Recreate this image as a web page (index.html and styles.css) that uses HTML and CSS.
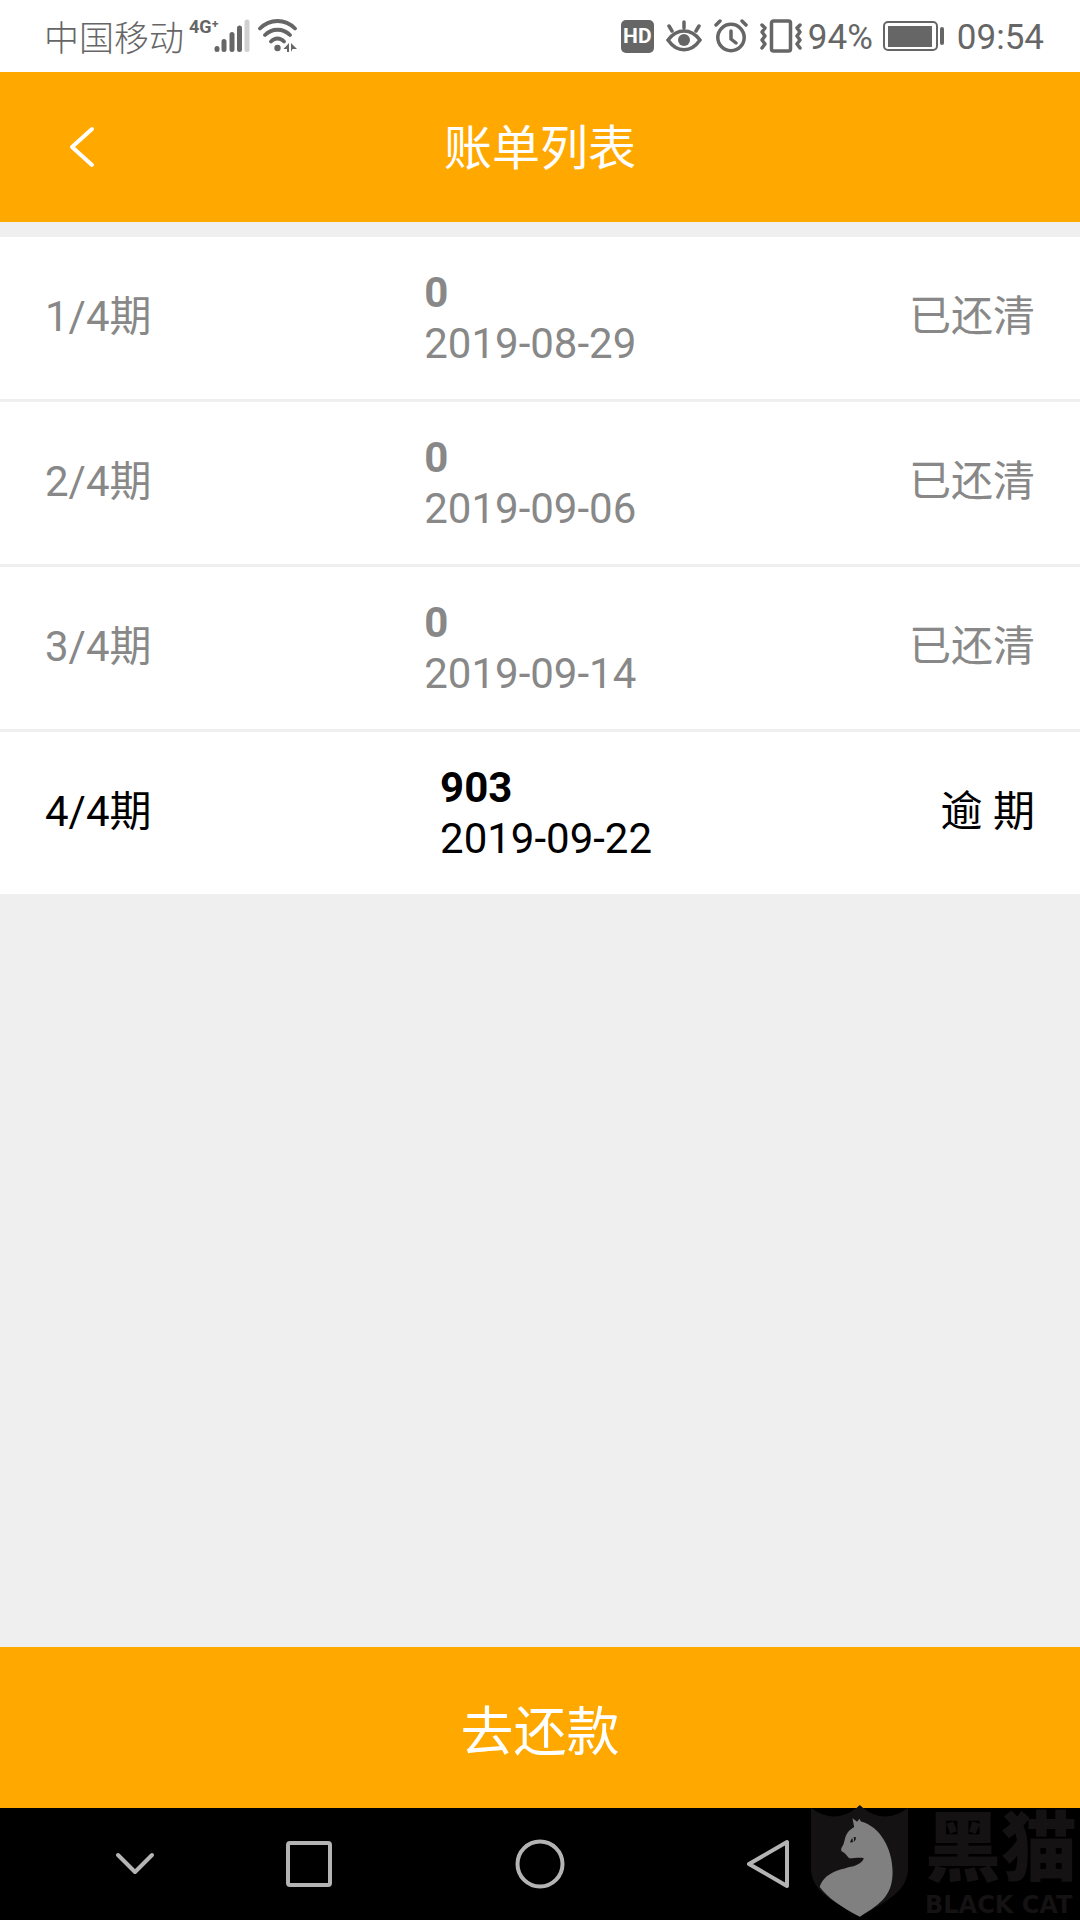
FILE: index.html
```html
<!DOCTYPE html>
<html lang="zh-CN">
<head>
  <meta charset="utf-8">
  <meta name="viewport" content="width=device-width">
  <title>账单列表</title>
  <link rel="stylesheet" href="styles.css">
</head>
<body>
  <div class="status-bar">
    <span class="carrier">中国移动</span>
    <span class="network">4G⁺</span>
    <svg class="signal" width="36" height="34" viewBox="0 0 36 34" fill="none" stroke="#666" stroke-width="5" stroke-linecap="round">
      <path d="M3 29.500v1M10 22.500v8M18 15.500v15M25.500 9v21.500"/>
      <path stroke="#d0d0d0" d="M33 3v27.500"/>
    </svg>
    <svg class="wifi" width="40" height="34" viewBox="0 0 40 34" fill="none" stroke="#666" stroke-width="3.800" stroke-linecap="round">
      <path d="M2 9.500C12-.5 27-.5 37 9.500M7 16c7-7 18-7 25 0M13 22.500c4-4 9-4 13 0"/>
      <circle cx="19.500" cy="29" r="3.200" fill="#666" stroke="none"/>
      <path fill="#666" stroke="none" d="M31 24v9h-2v-3h-3.500zM33 24v9l1.500-3H39z"/>
    </svg>

    <div class="status-right">
      <span class="hd">HD</span>
      <svg width="36" height="34" viewBox="0 0 36 34" fill="none" stroke="#666" stroke-width="3.500" stroke-linecap="round">
        <path d="M2 21C11 9 25 9 34 21C25 34 11 34 2 21zM18 3v6M3 7l3 5M33 7l-3 5"/>
        <circle cx="18" cy="21" r="6" fill="#666" stroke="none"/>
      </svg>
      <svg width="34" height="34" viewBox="0 0 34 34" fill="none" stroke="#666" stroke-width="3.500" stroke-linecap="round">
        <circle cx="17" cy="18.500" r="13.200"/>
        <path d="M17 12v8l5 4M2 6l4-4M32 6l-4-4"/>
      </svg>
      <svg width="42" height="34" viewBox="0 0 42 34" fill="none" stroke="#666" stroke-width="3.500" stroke-linecap="round" stroke-linejoin="round">
        <rect x="11.500" y="2" width="19" height="30" rx="2"/>
        <path d="M2 6l3 3-3 4 3 4-3 4 3 4-3 4M40 6l-3 3 3 4-3 4 3 4-3 4 3 4"/>
      </svg>
      <span class="percent">94%</span>
      <svg class="battery" width="62" height="30" viewBox="0 0 62 30" fill="none" stroke="#666">
        <rect x="1" y="1" width="53" height="28" rx="4" stroke-width="2"/>
        <rect x="5" y="5" width="44" height="21" fill="#666" stroke="none"/>
        <path stroke-width="4" stroke-linecap="round" d="M59 8v14"/>
      </svg>
      <span class="time">09:54</span>
    </div>
  </div>

  <header class="header">
    <a class="back" href="#" aria-label="返回">
      <svg width="26" height="42" viewBox="0 0 26 42" fill="none" stroke="#fff" stroke-width="4" stroke-linecap="round" stroke-linejoin="round">
        <path d="M23 3L3 21l20 18"/>
      </svg>
    </a>
    <h1>账单列表</h1>
  </header>

  <main class="main">
    <ul class="bills">
      <li class="bill">
        <span>1/4期</span>
        <div><strong>0</strong><time>2019-08-29</time></div>
        <span>已还清</span>
      </li>
      <li class="bill">
        <span>2/4期</span>
        <div><strong>0</strong><time>2019-09-06</time></div>
        <span>已还清</span>
      </li>
      <li class="bill">
        <span>3/4期</span>
        <div><strong>0</strong><time>2019-09-14</time></div>
        <span>已还清</span>
      </li>
      <li class="bill overdue">
        <span>4/4期</span>
        <div><strong>903</strong><time>2019-09-22</time></div>
        <span>逾 期</span>
      </li>
    </ul>
  </main>

  <button class="pay" type="button">去还款</button>

  <nav class="nav-bar">
    <button type="button" aria-label="收起">
      <svg width="40" height="24" viewBox="0 0 40 24"><path d="M3 3l17 17L37 3"/></svg>
    </button>
    <button type="button" aria-label="最近任务">
      <svg width="46" height="46" viewBox="0 0 46 46"><rect x="2" y="2" width="42" height="42" rx="2"/></svg>
    </button>
    <button type="button" aria-label="主屏幕">
      <svg width="50" height="50" viewBox="0 0 50 50"><circle cx="25" cy="25" r="22.500"/></svg>
    </button>
    <button type="button" aria-label="返回">
      <svg width="44" height="50" viewBox="0 0 44 50"><path d="M41 3v44L3 25z"/></svg>
    </button>
    <div class="brand">
      <svg width="97" height="112" viewBox="94 75 290 335">
        <path fill="#141213" d="M94 84Q165 135 230 84L240 75L250 84Q315 135 384 84V265C384 335 315 365 240 410C165 365 94 335 94 265z"/>
        <path fill="#808080" d="M218 115l14 10 7-9 4 8C300 138 338 205 338 275C338 340 310 368 240 409C180 378 145 352 120 320C135 278 175 270 213 260C237 254 247 246 252 234C236 230 221 235 208 234C200 227 197 219 188 215Q181 211 186 201C195 191 193 176 201 162C208 149 218 145 223 141z"/>
        <path fill="#141213" d="M211 187c2-10 8-16 17-16c1 10-5 17-17 16z"/>
        <path fill="#808080" d="M218 173l5-1-1 13-3 1z"/>
      </svg>
      <div class="brand-text">
        <span class="brand-cn">黑猫</span>
        <span class="brand-en">BLACK CAT</span>
      </div>
    </div>
  </nav>
</body>
</html>
```
FILE: styles.css
```css
* { box-sizing: border-box; }
body { margin: 0; min-height: 100vh; display: flex; flex-direction: column; background: #efefef; color: #000; font-family: Roboto, "Noto Sans CJK SC", sans-serif; }
svg { display: block; flex: none; }
button { border: 0; padding: 0; background: none; font-family: inherit; cursor: pointer; }

.status-bar { display: flex; align-items: center; height: 72px; padding: 0 36px 0 44px; background: #fff; color: #666; font-size: 35px; white-space: nowrap; }
.carrier { padding-bottom: 2px; font-weight: 300; }
.network { align-self: flex-start; margin: 16px 0 0 5px; font-size: 18px; line-height: 22px; font-weight: 700; }
.signal { margin-left: -5px; }
.wifi { margin-left: 8px; }
.status-right { display: flex; align-items: center; gap: 12px; margin-left: auto; }
.hd { width: 33px; height: 33px; border-radius: 5px; background: #666; color: #fff; font-size: 21px; line-height: 33px; font-weight: 700; text-align: center; }
.percent { margin-left: -6px; }
.percent, .time { padding-top: 2px; }
.battery { margin-left: -2px; }

.header { display: grid; grid-template-columns: 1fr auto 1fr; align-items: center; height: 150px; background: #ffa800; color: #fff; }
.header h1 { margin: 0; padding-bottom: 6px; font-size: 48px; font-weight: 400; }
.back { justify-self: start; padding: 20px 40px 20px 69px; }

.main { flex: 1; padding-top: 15px; }
.bills { margin: 0; padding: 0; list-style: none; }
.bill { display: flex; justify-content: space-between; align-items: center; padding: 30px 45px; background: #fff; color: #888; font-size: 42px; line-height: 51px; }
.bill + .bill { margin-top: 3px; }
.bill span { padding-bottom: 4px; }
.bill strong, .bill time { display: block; }
.bill.overdue { color: #000; }

.pay { height: 161px; background: #ffa800; color: #fff; font-size: 53px; }

.nav-bar { position: relative; display: grid; grid-template-columns: 182fr 166fr 296fr 160fr 232fr; align-items: center; height: 112px; padding-left: 44px; background: #000; }
.nav-bar button { display: flex; justify-content: center; }
.nav-bar button svg { fill: none; stroke: #b4b4b4; stroke-width: 4; stroke-linecap: round; stroke-linejoin: round; }

/* brand mark sits over the bar and touches the pay button */
.brand { position: absolute; right: 3px; bottom: 3px; display: flex; gap: 17px; color: #141213; }
.brand-text { display: flex; flex-direction: column; justify-content: flex-end; }
.brand-cn { font-size: 76px; line-height: 88px; font-weight: 900; }
.brand-en { font-family: "DejaVu Sans", sans-serif; font-size: 24px; line-height: 24px; font-weight: 700; white-space: nowrap; }
```
